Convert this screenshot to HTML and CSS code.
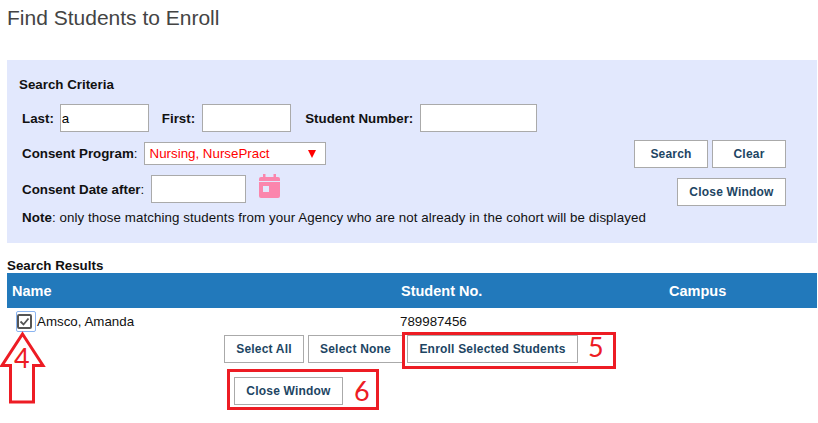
FILE: index.html
```html
<!DOCTYPE html>
<html lang="en">
<head>
    <meta charset="UTF-8">
    <meta name="viewport" content="width=device-width, initial-scale=1.0">
    <title>Find Students to Enroll</title>
    <link rel="stylesheet" href="styles.css">
</head>
<body>
    <h1 class="page-title">Find Students to Enroll</h1>

    <div class="criteria">
        <div class="criteria-fields">
            <h2 class="criteria-title">Search Criteria</h2>
            <div class="row row-names">
                <label class="label" for="last">Last:</label>
                <input class="text-input name-input" type="text" id="last" value="a">
                <label class="label label-first" for="first">First:</label>
                <input class="text-input name-input" type="text" id="first">
                <label class="label label-number" for="number">Student Number:</label>
                <input class="text-input number-input" type="text" id="number">
            </div>
            <div class="row row-program">
                <span class="label">Consent Program<span class="colon">:</span></span>
                <div class="select-box">
                    <span>Nursing, NursePract</span>
                    <span class="select-arrow"></span>
                </div>
            </div>
            <div class="row row-date">
                <label class="label" for="consentDate">Consent Date after<span class="colon">:</span></label>
                <input class="text-input date-input" type="text" id="consentDate">
                <svg class="calendar" width="21" height="24" viewBox="0 0 21 24">
                    <path fill="#fb86ad" d="M4 0h2.5v3h8V0H17v3h2a2 2 0 0 1 2 2v2H0V5a2 2 0 0 1 2-2h2zM0 8h21v14a2 2 0 0 1-2 2H2a2 2 0 0 1-2-2z"/>
                    <rect x="4" y="12" width="6" height="6" fill="#e2e8fd"/>
                </svg>
            </div>
            <p class="note"><b>Note</b>: only those matching students from your Agency who are not already in the cohort will be displayed</p>
        </div>
        <div class="criteria-actions">
            <div class="action-row">
                <button class="btn btn-wide" type="button">Search</button>
                <button class="btn btn-wide" type="button">Clear</button>
            </div>
            <div class="action-row">
                <button class="btn btn-close" type="button">Close Window</button>
            </div>
        </div>
    </div>

    <div class="results-title">Search Results</div>
    <div class="results-head">
        <div class="col-name">Name</div>
        <div class="col-number">Student No.</div>
        <div class="col-campus">Campus</div>
    </div>
    <div class="result-row">
        <div class="col-name check-cell">
            <span class="check-ring">
                <svg width="15" height="15" viewBox="0 0 15 15">
                    <rect x="1" y="1" width="13" height="13" rx="1" fill="#fff" stroke="#555" stroke-width="2"/>
                    <path d="M3.5 7.5l3 3 5-6" fill="none" stroke="#555" stroke-width="1.8"/>
                </svg>
            </span>
            <span>Amsco, Amanda</span>
        </div>
        <div class="col-number">789987456</div>
    </div>
    <div class="result-actions">
        <button class="btn btn-all" type="button">Select All</button>
        <button class="btn btn-none" type="button">Select None</button>
        <button class="btn btn-enroll" type="button">Enroll Selected Students</button>
    </div>
    <div class="result-close">
        <button class="btn btn-close" type="button">Close Window</button>
    </div>

    <svg class="up-arrow" width="48" height="78" viewBox="0 0 48 78">
        <path d="M22.5 5L43 36.5H33.5V73H10.500V36.5H2z" fill="none" stroke="#ed1c24" stroke-width="3"/>
    </svg>
    <span class="callout callout-4">4</span>
    <div class="red-box box-enroll"></div>
    <span class="callout callout-5">5</span>
    <div class="red-box box-close"></div>
    <span class="callout callout-6">6</span>
</body>
</html>
```

FILE: styles.css
```css
body {
    margin: 0;
    font-family: "Liberation Sans", Arial, sans-serif;
    font-size: 13.33px;
    color: #111;
    background-color: #fff;
}
.page-title {
    margin: 0;
    padding: 6px 7px 0;
    height: 60px;
    box-sizing: border-box;
    font-size: 21px;
    line-height: 24px;
    font-weight: normal;
    color: #444;
}
.criteria {
    display: flex;
    height: 183px;
    margin: 0 1px 0 7px;
    padding: 17px 31px 0 12px;
    box-sizing: border-box;
    background-color: #e2e8fd;
}
.criteria-fields {
    flex: 1;
    min-width: 0;
}
.criteria-title {
    margin: 0 0 12px;
    font-size: 13.33px;
    line-height: 15px;
    font-weight: bold;
}
.row {
    display: flex;
    align-items: center;
    padding-left: 3px;
}
.row-names {
    height: 28px;
    margin-bottom: 10px;
}
.row-program {
    height: 23px;
    margin-bottom: 10px;
}
.row-date {
    height: 28px;
    margin-bottom: 7px;
}
.label {
    font-weight: bold;
}
.colon {
    font-weight: normal;
}
.label-first {
    margin-left: 13px;
    margin-right: 1px;
}
.label-number {
    margin-left: 14px;
}
.text-input {
    height: 28px;
    box-sizing: border-box;
    padding: 0 1px;
    margin-left: 6px;
    border: 1px solid #aaa;
    background-color: #fff;
    font-family: inherit;
    font-size: 13.33px;
}
.name-input {
    width: 89px;
}
.number-input {
    width: 117px;
    margin-left: 7px;
}
.date-input {
    width: 95px;
    margin-left: 7px;
}
.calendar {
    margin: 0 0 7px 13px;
}
.select-box {
    display: flex;
    justify-content: space-between;
    align-items: center;
    width: 182px;
    height: 23px;
    box-sizing: border-box;
    margin-left: 6px;
    padding: 0 9px 0 5px;
    border: 1px solid #aaa;
    background-color: #fff;
    color: #f00;
}
.select-arrow {
    width: 0;
    height: 0;
    border-left: 4px solid transparent;
    border-right: 4px solid transparent;
    border-top: 8px solid #f00;
}
.note {
    margin: 0;
    padding-left: 3px;
    line-height: 16px;
    letter-spacing: 0.08px;
    white-space: nowrap;
}
.criteria-actions {
    display: flex;
    flex-direction: column;
    align-items: flex-end;
    gap: 10px;
    padding-top: 63px;
}
.action-row {
    display: flex;
    gap: 4px;
}
.btn {
    height: 28px;
    box-sizing: border-box;
    padding: 0;
    border: 1px solid #aaa;
    background-color: #fff;
    color: #1d4563;
    font-family: inherit;
    font-size: 12px;
    font-weight: bold;
    letter-spacing: 0.2px;
}
.btn-wide {
    width: 74px;
}
.btn-close {
    width: 109px;
}
.btn-all {
    width: 80px;
}
.btn-none {
    width: 95px;
}
.btn-enroll {
    width: 171px;
}
.results-title {
    margin: 15px 0 0 7px;
    line-height: 15px;
    font-weight: bold;
}
.results-head {
    display: flex;
    height: 35px;
    align-items: center;
    margin: 0 1px 0 7px;
    background-color: #2279bb;
    color: #fff;
    font-size: 14.5px;
    font-weight: bold;
}
.result-row {
    display: flex;
    align-items: center;
    height: 27px;
    margin-left: 7px;
}
.col-name {
    width: 389px;
    padding-left: 5px;
    box-sizing: border-box;
}
.col-number {
    width: 268px;
    padding-left: 5px;
    box-sizing: border-box;
}
.col-campus {
    padding-left: 5px;
}
.result-row .col-number {
    padding-left: 4px;
}
.check-cell {
    display: flex;
    align-items: center;
    padding-left: 9px;
}
.check-ring {
    display: flex;
    height: 15px;
    padding: 2px 3px 2px 0;
    margin-right: 1px;
    border: 1px solid #8ab4f0;
    border-radius: 2px;
}
.result-actions {
    display: flex;
    gap: 4px;
    padding-left: 224px;
}
.result-close {
    padding: 14px 0 0 234px;
}
.up-arrow {
    position: absolute;
    left: 0;
    top: 329px;
}
.red-box {
    position: absolute;
    box-sizing: border-box;
    border: 3px solid #ed1c24;
}
.box-enroll {
    left: 402px;
    top: 332px;
    width: 214px;
    height: 37px;
}
.box-close {
    left: 227px;
    top: 369px;
    width: 152px;
    height: 41px;
}
.callout {
    position: absolute;
    font-family: Lato, sans-serif;
    font-size: 27px;
    line-height: 32px;
    color: #ed1c24;
}
.callout-4 {
    left: 14px;
    top: 342px;
}
.callout-5 {
    left: 588px;
    top: 331px;
}
.callout-6 {
    left: 354px;
    top: 375px;
}
```
